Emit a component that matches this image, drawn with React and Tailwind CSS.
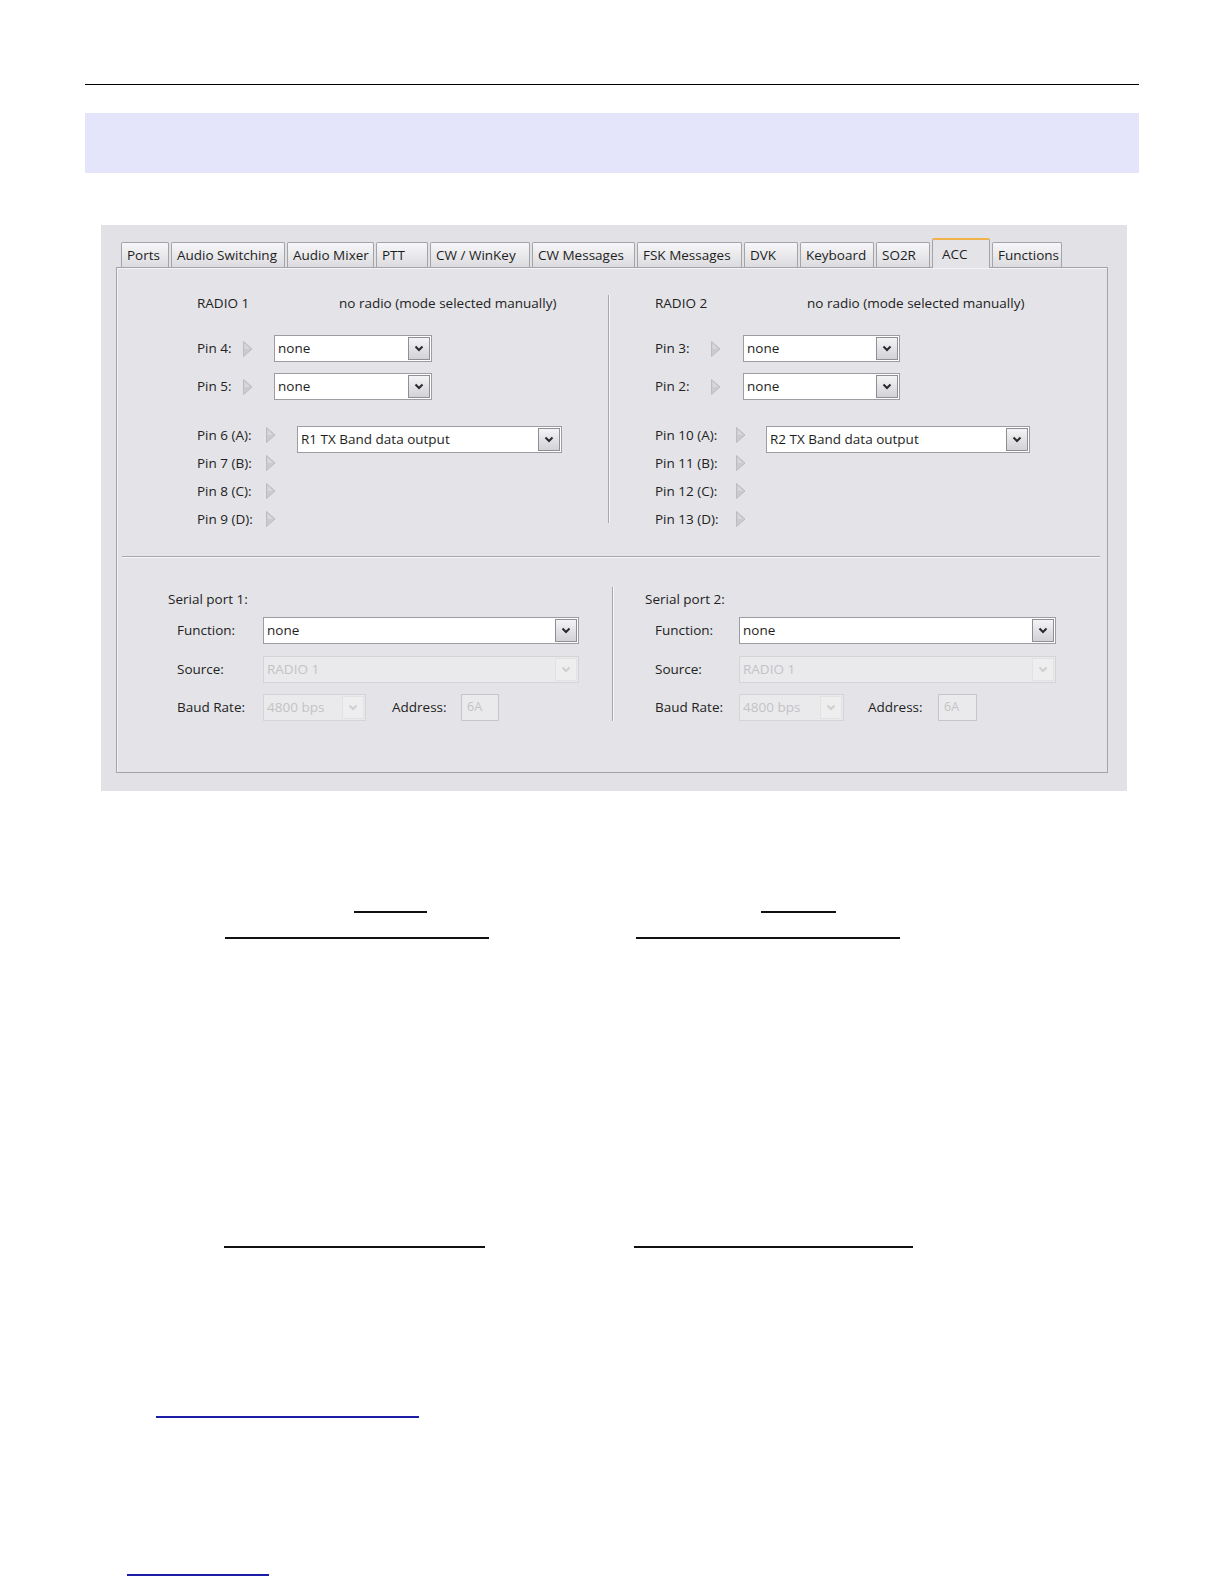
import React from "react";

function Arrow() {
  return (
    <svg width="11" height="18" viewBox="0 0 11 18" className="shrink-0">
      <polygon points="1.5,1.5 10,9 1.5,16.5" fill="#cbcbcf" stroke="#bdbdc1" strokeWidth="1" strokeLinejoin="round" />
      <polygon points="2.5,3.5 8,9 2.5,9" fill="#d8d8dc" />
    </svg>
  );
}

function Chevron({ disabled }) {
  return (
    <svg width="10" height="7" viewBox="0 0 10 7">
      <polyline
        points="1.5,1.5 5,5 8.5,1.5"
        fill="none"
        stroke={disabled ? "#cfcfd2" : "#2a2a2e"}
        strokeWidth="2"
      />
    </svg>
  );
}

function Select({ w, text, disabled }) {
  return (
    <div
      className={`${w} h-[27px] shrink-0 flex items-stretch border ${
        disabled ? "border-[#d4d4d7] bg-[#eaeaec]" : "border-[#9c9ca2] bg-white"
      }`}
    >
      <div
        className={`flex-1 flex items-center pl-[3px] text-[13.5px] whitespace-nowrap ${
          disabled ? "text-[#c3c3c6]" : "text-[#1e1e1e]"
        }`}
      >
        {text}
      </div>
      <div
        className={`w-[22px] m-px flex items-center justify-center border ${
          disabled
            ? "border-[#e2e2e4] bg-[#eeeeef]"
            : "border-[#8e8e94] bg-gradient-to-b from-[#f4f4f6] to-[#d2d2d7]"
        }`}
      >
        <Chevron disabled={disabled} />
      </div>
    </div>
  );
}

function Tab({ w, label, selected }) {
  if (selected) {
    return (
      <div
        className={`${w} h-[30px] -mb-px relative z-10 flex items-start pt-[4px] pl-[9px] text-[13.5px] text-[#1e1e1e] bg-[#e4e4e8] border-x border-[#a4a4a8] border-t-2 border-t-[#f0b24a] rounded-t-[2px] whitespace-nowrap`}
      >
        {label}
      </div>
    );
  }
  return (
    <div
      className={`${w} h-[25px] flex items-center pl-[5px] text-[13.5px] text-[#1e1e1e] bg-gradient-to-b from-[#f7f7f9] to-[#dcdce0] border-x border-t border-[#a4a4a8] rounded-t-[2px] whitespace-nowrap overflow-hidden`}
    >
      {label}
    </div>
  );
}

function PinRow({ labelW, label, selW, selMl }) {
  return (
    <div className="flex items-center h-[27px]">
      <div className={`${labelW} shrink-0 whitespace-nowrap`}>{label}</div>
      <Arrow />
      <div className={selMl}>
        <Select w={selW} text="none" />
      </div>
    </div>
  );
}

function PinGroup({ labels, labelW, selW, selMl, text }) {
  return (
    <div className="flex items-start">
      <div className="flex flex-col">
        {labels.map((l) => (
          <div key={l} className="h-[28px] flex items-center">
            <div className={`${labelW} shrink-0 whitespace-nowrap`}>{l}</div>
            <Arrow />
          </div>
        ))}
      </div>
      <div className={`${selMl} mt-[5px]`}>
        <Select w={selW} text={text} />
      </div>
    </div>
  );
}

function SerialCol({ title, labelPl, labelW, fnW, baudW, addrMl, addrLabelW, boxW }) {
  return (
    <div className="flex flex-col pt-[2px]">
      <div className="h-[20px] flex items-center whitespace-nowrap">{title}</div>
      <div className="flex items-center mt-[8px]">
        <div className={`${labelW} ${labelPl} shrink-0`}>Function:</div>
        <Select w={fnW} text="none" />
      </div>
      <div className="flex items-center mt-[12px]">
        <div className={`${labelW} ${labelPl} shrink-0`}>Source:</div>
        <Select w={fnW} text="RADIO 1" disabled />
      </div>
      <div className="flex items-center mt-[11px]">
        <div className={`${labelW} ${labelPl} shrink-0 whitespace-nowrap`}>Baud Rate:</div>
        <Select w={baudW} text="4800 bps" disabled />
        <div className={`${addrMl} ${addrLabelW} shrink-0`}>Address:</div>
        <div
          className={`${boxW} h-[27px] border border-[#c6c6ca] bg-[#eaeaec] text-[#c3c3c6] pl-[5px] flex items-center text-[12.5px]`}
        >
          6A
        </div>
      </div>
    </div>
  );
}

export default function App() {
  return (
    <div className="w-[1224px] h-[1584px] bg-white pt-[84px] font-['Open_Sans','Noto_Sans',sans-serif] overflow-hidden">
      <div className="mx-[85px] h-px bg-black" />
      <div className="mx-[85px] mt-[28px] h-[60px] bg-[#e4e4fa]" />

      {/* dialog screenshot */}
      <div className="ml-[101px] mt-[52px] w-[1026px] h-[566px] bg-[#e2e2e6] pt-[13px] text-[13.5px] text-[#222]">
        {/* tabs */}
        <div className="flex items-end gap-[2px] pl-[20px] h-[29px]">
          <Tab w="w-[48px]" label="Ports" />
          <Tab w="w-[114px]" label="Audio Switching" />
          <Tab w="w-[87px]" label="Audio Mixer" />
          <Tab w="w-[52px]" label="PTT" />
          <Tab w="w-[100px]" label="CW / WinKey" />
          <Tab w="w-[103px]" label="CW Messages" />
          <Tab w="w-[105px]" label="FSK Messages" />
          <Tab w="w-[54px]" label="DVK" />
          <Tab w="w-[74px]" label="Keyboard" />
          <Tab w="w-[54px]" label="SO2R" />
          <Tab w="w-[58px]" label="ACC" selected />
          <Tab w="w-[70px]" label="Functions" />
        </div>

        {/* panel */}
        <div className="ml-[15px] w-[992px] h-[506px] border border-[#a4a4a8] bg-[#e4e4e8] shadow-[inset_1px_1px_0_#f4f4f6]">
          {/* top section */}
          <div className="flex items-start pl-[80px] pt-[25px]">
            {/* radio 1 */}
            <div className="w-[411px] shrink-0 flex flex-col">
              <div className="h-[20px] flex items-center whitespace-nowrap">
                <div className="w-[142px]">RADIO 1</div>
                <div>no radio (mode selected manually)</div>
              </div>
              <div className="mt-[22px]">
                <PinRow labelW="w-[45px]" label="Pin 4:" selW="w-[158px]" selMl="ml-[21px]" />
              </div>
              <div className="mt-[11px]">
                <PinRow labelW="w-[45px]" label="Pin 5:" selW="w-[158px]" selMl="ml-[21px]" />
              </div>
              <div className="mt-[21px]">
                <PinGroup
                  labels={["Pin 6 (A):", "Pin 7 (B):", "Pin 8 (C):", "Pin 9 (D):"]}
                  labelW="w-[68px]"
                  selW="w-[265px]"
                  selMl="ml-[21px]"
                  text="R1 TX Band data output"
                />
              </div>
            </div>
            <div className="w-px h-[228px] mt-[2px] bg-[#a8a8ac] shadow-[1px_0_0_#f6f6f8] shrink-0" />
            {/* radio 2 */}
            <div className="ml-[46px] flex flex-col">
              <div className="h-[20px] flex items-center whitespace-nowrap">
                <div className="w-[152px]">RADIO 2</div>
                <div>no radio (mode selected manually)</div>
              </div>
              <div className="mt-[22px]">
                <PinRow labelW="w-[55px]" label="Pin 3:" selW="w-[157px]" selMl="ml-[22px]" />
              </div>
              <div className="mt-[11px]">
                <PinRow labelW="w-[55px]" label="Pin 2:" selW="w-[157px]" selMl="ml-[22px]" />
              </div>
              <div className="mt-[21px]">
                <PinGroup
                  labels={["Pin 10 (A):", "Pin 11 (B):", "Pin 12 (C):", "Pin 13 (D):"]}
                  labelW="w-[80px]"
                  selW="w-[264px]"
                  selMl="ml-[20px]"
                  text="R2 TX Band data output"
                />
              </div>
            </div>
          </div>

          {/* separator */}
          <div className="ml-[5px] w-[978px] mt-[23px] h-px bg-[#a8a8ac] shadow-[0_1px_0_#f6f6f8]" />

          {/* serial section */}
          <div className="flex items-start pl-[51px] pt-[30px]">
            <div className="w-[444px] shrink-0">
              <SerialCol
                title="Serial port 1:"
                labelPl="pl-[9px]"
                labelW="w-[95px]"
                fnW="w-[316px]"
                baudW="w-[103px]"
                addrMl="ml-[26px]"
                addrLabelW="w-[69px]"
                boxW="w-[38px]"
              />
            </div>
            <div className="w-px h-[134px] bg-[#a8a8ac] shadow-[1px_0_0_#f6f6f8] shrink-0" />
            <div className="ml-[32px]">
              <SerialCol
                title="Serial port 2:"
                labelPl="pl-[10px]"
                labelW="w-[94px]"
                fnW="w-[317px]"
                baudW="w-[105px]"
                addrMl="ml-[24px]"
                addrLabelW="w-[70px]"
                boxW="w-[39px]"
              />
            </div>
          </div>
        </div>
      </div>

      {/* underlines of the page text */}
      <div className="mt-[120px] flex h-[1.5px]">
        <div className="ml-[354px] w-[73px] bg-[#111]" />
        <div className="ml-[334px] w-[75px] bg-[#111]" />
      </div>
      <div className="mt-[24.5px] flex h-[1.5px]">
        <div className="ml-[225px] w-[264px] bg-[#111]" />
        <div className="ml-[147px] w-[264px] bg-[#111]" />
      </div>
      <div className="mt-[307.5px] flex h-[1.5px]">
        <div className="ml-[224px] w-[261px] bg-[#111]" />
        <div className="ml-[149px] w-[279px] bg-[#111]" />
      </div>
      <div className="mt-[168.5px] flex h-[1.5px]">
        <div className="ml-[156px] w-[263px] bg-[#1c1ca8]" />
      </div>
      <div className="mt-[156.5px] flex h-[1.5px]">
        <div className="ml-[127px] w-[142px] bg-[#1c1ca8]" />
      </div>
    </div>
  );
}
